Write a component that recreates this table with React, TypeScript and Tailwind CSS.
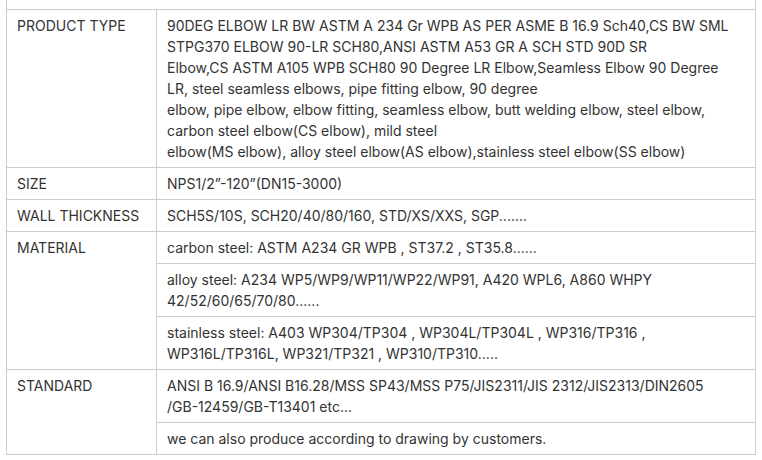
const rows: { label?: string; span?: number; lines: string[] }[] = [
  {
    label: 'PRODUCT TYPE',
    lines: [
      '90DEG ELBOW LR BW ASTM A 234 Gr WPB AS PER ASME B 16.9 Sch40,CS BW SML',
      'STPG370 ELBOW 90-LR SCH80,ANSI ASTM A53 GR A SCH STD 90D SR',
      'Elbow,CS ASTM A105 WPB SCH80 90 Degree LR Elbow,Seamless Elbow 90 Degree',
      'LR, steel seamless elbows, pipe fitting elbow, 90 degree',
      'elbow, pipe elbow, elbow fitting, seamless elbow, butt welding elbow, steel elbow,',
      'carbon steel elbow(CS elbow), mild steel',
      'elbow(MS elbow), alloy steel elbow(AS elbow),stainless steel elbow(SS elbow)',
    ],
  },
  { label: 'SIZE', lines: ['NPS1/2”-120”(DN15-3000)'] },
  { label: 'WALL THICKNESS', lines: ['SCH5S/10S, SCH20/40/80/160, STD/XS/XXS, SGP.......'] },
  { label: 'MATERIAL', span: 3, lines: ['carbon steel: ASTM A234 GR WPB , ST37.2 , ST35.8......'] },
  {
    lines: [
      'alloy steel: A234 WP5/WP9/WP11/WP22/WP91, A420 WPL6, A860 WHPY',
      '42/52/60/65/70/80......',
    ],
  },
  {
    lines: [
      'stainless steel: A403 WP304/TP304 , WP304L/TP304L , WP316/TP316 ,',
      'WP316L/TP316L, WP321/TP321 , WP310/TP310.....',
    ],
  },
  {
    label: 'STANDARD',
    span: 2,
    lines: [
      'ANSI B 16.9/ANSI B16.28/MSS SP43/MSS P75/JIS2311/JIS 2312/JIS2313/DIN2605',
      '/GB-12459/GB-T13401 etc...',
    ],
  },
  { lines: ['we can also produce according to drawing by customers.'] },
];

export default function App() {
  return (
    <div className="min-h-screen bg-white pl-[6px] font-['Inter','Liberation_Sans',sans-serif] text-[14px] leading-[21px] text-[#333]">
      {/* tail of the row above */}
      <div className="h-[9px] w-[750px] border-x border-[#ccc]" />
      <table className="w-[750px] table-fixed border-collapse">
        <colgroup>
          <col className="w-[150px]" />
          <col />
        </colgroup>
        <tbody>
          {rows.map((row, i) => (
            <tr key={i}>
              {row.label && (
                <td rowSpan={row.span} className="border border-[#ccc] px-[10px] py-[5px] align-top">
                  {row.label}
                </td>
              )}
              <td className="border border-[#ccc] px-[10px] py-[5px] align-top">
                {row.lines.map((line, j) => (
                  <div key={j} className="whitespace-nowrap">{line}</div>
                ))}
              </td>
            </tr>
          ))}
        </tbody>
      </table>
    </div>
  );
}
